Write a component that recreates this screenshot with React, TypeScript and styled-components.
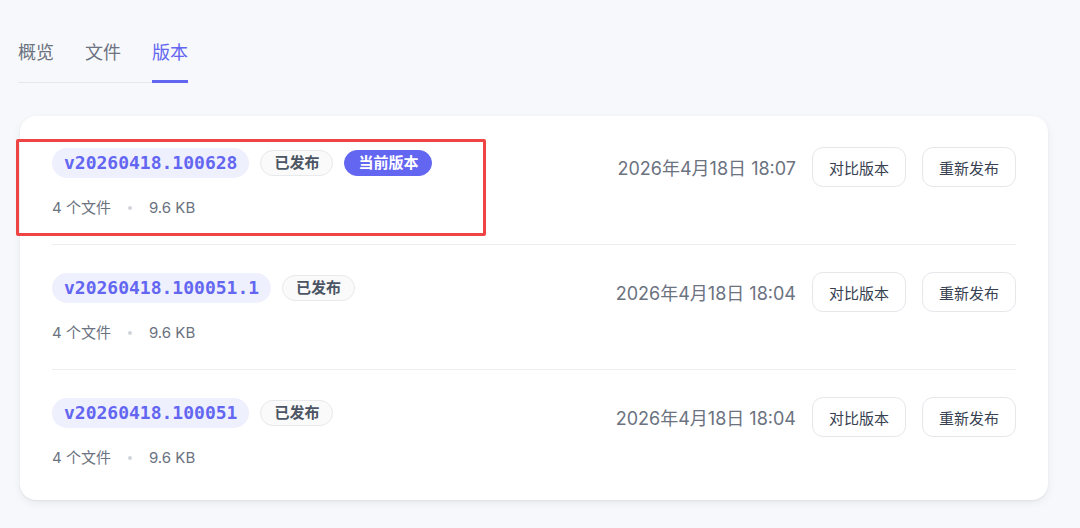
import React from "react";
import styled, { createGlobalStyle } from "styled-components";

const Global = createGlobalStyle`
  html, body { margin: 0; padding: 0; background: #f7f8fb; }
  body { font-family: Inter, "Noto Sans CJK SC", sans-serif; -webkit-font-smoothing: antialiased; }
`;

const Page = styled.div`
  width: 1080px;
  height: 528px;
  box-sizing: border-box;
  padding: 40px 32px 0 18px;
  background: #f7f8fb;
  overflow: hidden;
`;

const TabList = styled.div`
  display: inline-flex;
  gap: 31px;
  border-bottom: 1px solid #e5e7eb;
`;

const Tab = styled.div<{ $active?: boolean }>`
  font-size: 18px;
  line-height: 26px;
  padding-bottom: 14px;
  margin-bottom: -1px;
  color: ${(p) => (p.$active ? "#6366f1" : "#6b7280")};
  border-bottom: 3px solid ${(p) => (p.$active ? "#6366f1" : "transparent")};
`;

const Card = styled.div`
  position: relative;
  margin: 33px 0 0 2px;
  background: #ffffff;
  border-radius: 16px;
  box-shadow: 0 1px 2px rgba(17, 24, 39, 0.06), 0 3px 8px rgba(17, 24, 39, 0.06);
  padding: 4px 32px 5px;
`;

const Row = styled.div<{ $last?: boolean }>`
  display: flex;
  justify-content: space-between;
  align-items: flex-start;
  padding: 28px 0 26px;
  border-bottom: 1px solid ${(p) => (p.$last ? "transparent" : "#eceef2")};
`;

const Left = styled.div`
  display: flex;
  flex-direction: column;
  gap: 20px;
`;

const TagLine = styled.div`
  display: flex;
  align-items: center;
  gap: 11px;
`;

const VersionPill = styled.span`
  font-family: "DejaVu Sans Mono", "Liberation Mono", monospace;
  font-weight: 700;
  font-size: 18px;
  line-height: 30px;
  padding: 0 12px;
  border-radius: 15px;
  color: #6366f1;
  background: #eff0fd;
`;

const Badge = styled.span<{ $current?: boolean }>`
  font-size: 15px;
  font-weight: 700;
  line-height: 24px;
  padding: 0 13px;
  border-radius: 13px;
  border: 1px solid ${(p) => (p.$current ? "#6366f1" : "#e8e9ed")};
  background: ${(p) => (p.$current ? "#6366f1" : "#fafafa")};
  color: ${(p) => (p.$current ? "#ffffff" : "#4b5563")};
`;

const Meta = styled.div`
  display: flex;
  align-items: center;
  gap: 16px;
  font-size: 15px;
  line-height: 20px;
  color: #6b7280;
`;

const Dot = styled.span`
  width: 4px;
  height: 4px;
  margin: 0 1px;
  border-radius: 50%;
  background: #d1d5db;
`;

const Right = styled.div`
  display: flex;
  align-items: center;
  gap: 16px;
  margin-top: -1px;
`;

const DateText = styled.span`
  font-size: 18px;
  color: #6b7280;
`;

const Button = styled.button`
  font-family: Inter, "Noto Sans CJK SC", sans-serif;
  font-size: 15px;
  height: 40px;
  padding: 0 16px;
  border-radius: 11px;
  border: 1px solid #e5e7eb;
  background: #ffffff;
  color: #374151;
`;

const Highlight = styled.div`
  position: absolute;
  left: -4px;
  top: 23px;
  width: 470px;
  height: 97px;
  box-sizing: border-box;
  border: 3px solid #ef4444;
  border-radius: 2px;
  pointer-events: none;
`;

const versions = [
  { v: "v20260418.100628", date: "2026年4月18日 18:07", current: true },
  { v: "v20260418.100051.1", date: "2026年4月18日 18:04" },
  { v: "v20260418.100051", date: "2026年4月18日 18:04" },
];

export default function App() {
  return (
    <>
      <Global />
      <Page>
        <TabList>
          <Tab>概览</Tab>
          <Tab>文件</Tab>
          <Tab $active>版本</Tab>
        </TabList>
        <Card>
          {versions.map((item, i) => (
            <Row key={item.v} $last={i === versions.length - 1}>
              <Left>
                <TagLine>
                  <VersionPill>{item.v}</VersionPill>
                  <Badge>已发布</Badge>
                  {item.current && <Badge $current>当前版本</Badge>}
                </TagLine>
                <Meta>
                  <span>4 个文件</span>
                  <Dot />
                  <span>9.6 KB</span>
                </Meta>
              </Left>
              <Right>
                <DateText>{item.date}</DateText>
                <Button>对比版本</Button>
                <Button>重新发布</Button>
              </Right>
            </Row>
          ))}
          <Highlight />
        </Card>
      </Page>
    </>
  );
}
